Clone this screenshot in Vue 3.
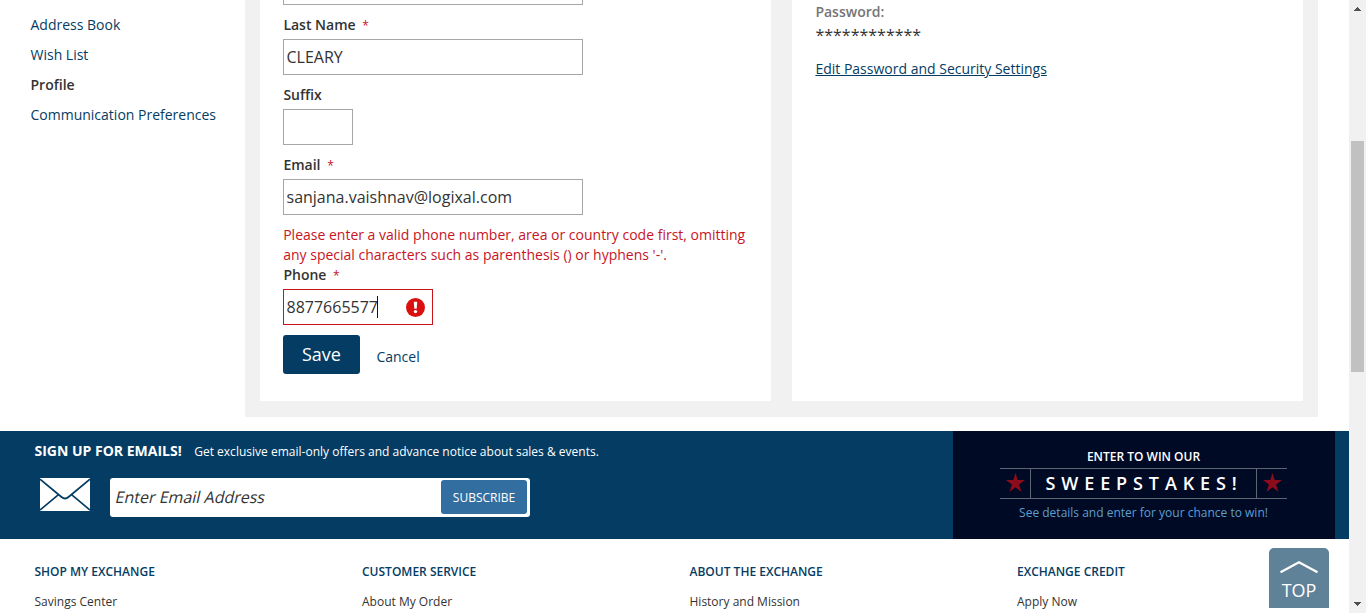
<script setup>
const navItems = [
  { label: 'Address Book' },
  { label: 'Wish List' },
  { label: 'Profile', active: true },
  { label: 'Communication Preferences' },
]

const footerColumns = [
  { title: 'SHOP MY EXCHANGE', link: 'Savings Center' },
  { title: 'CUSTOMER SERVICE', link: 'About My Order' },
  { title: 'ABOUT THE EXCHANGE', link: 'History and Mission' },
  { title: 'EXCHANGE CREDIT', link: 'Apply Now' },
]
</script>

<template>
  <div class="window">
    <div class="page">
      <main class="account">
        <nav class="side">
          <a v-for="item in navItems" :key="item.label" :class="{ active: item.active }">{{ item.label }}</a>
        </nav>
        <div class="panel">
          <section class="card form">
            <div class="box clipped"></div>
            <div class="field">
              <label>Last Name <b>*</b></label>
              <div class="box"><span class="value">CLEARY</span></div>
            </div>
            <div class="field">
              <label>Suffix</label>
              <div class="box tiny"></div>
            </div>
            <div class="field">
              <label>Email <b>*</b></label>
              <div class="box"><span class="value">sanjana.vaishnav@logixal.com</span></div>
            </div>
            <div class="field">
              <p class="error">Please enter a valid phone number, area or country code first, omitting<br>any special characters such as parenthesis () or hyphens '-'.</p>
              <label>Phone <b>*</b></label>
              <div class="box phone">
                <span class="value">8877665577</span><i class="caret"></i>
                <svg class="alert" width="19" height="19" viewBox="0 0 19 19">
                  <circle cx="9.5" cy="9.5" r="9.5" fill="#dc0f0f" />
                  <path d="M7.800 3.800h3.400l-.5 7h-2.400z" fill="#fff" />
                  <circle cx="9.5" cy="13.600" r="1.700" fill="#fff" />
                </svg>
              </div>
            </div>
            <div class="actions">
              <button class="save">Save</button>
              <a class="cancel">Cancel</a>
            </div>
          </section>
          <section class="card security">
            <div class="pw-label">Password:</div>
            <div class="pw-mask">************</div>
            <a class="pw-edit">Edit Password and Security Settings</a>
          </section>
        </div>
      </main>

      <section class="banner">
        <div class="signup">
          <div class="headline"><strong>SIGN UP FOR EMAILS!</strong><span>Get exclusive email-only offers and advance notice about sales &amp; events.</span></div>
          <div class="subscribe-row">
            <svg class="envelope" width="50" height="33" viewBox="0 0 50 33">
              <rect width="50" height="33" fill="#fff" />
              <path d="M0 1.2 21.5 19Q25 22 28.500 19L50 1.200M0 32 18.500 16.700M50 32 31.500 16.700" fill="none" stroke="#043c63" stroke-width="1.7" />
            </svg>
            <div class="email-box">
              <span>Enter Email Address</span>
              <button>SUBSCRIBE</button>
            </div>
          </div>
        </div>
        <div class="sweeps">
          <div class="enter">ENTER TO WIN OUR</div>
          <div class="title-row">
            <div class="star-cell"><svg width="19" height="19" viewBox="0 0 19 19"><path d="M9.500 0 11.700 7H19L13.100 11.500 15.400 18.700 9.500 14.300 3.600 18.700 5.900 11.500 0 7H7.300Z" fill="#8d0c1c" /></svg></div>
            <div class="title">SWEEPSTAKES!</div>
            <div class="star-cell"><svg width="19" height="19" viewBox="0 0 19 19"><path d="M9.500 0 11.700 7H19L13.100 11.500 15.400 18.700 9.500 14.300 3.600 18.700 5.900 11.500 0 7H7.300Z" fill="#8d0c1c" /></svg></div>
          </div>
          <div class="details">See details and enter for your chance to win!</div>
        </div>
      </section>

      <footer class="footer">
        <div v-for="col in footerColumns" :key="col.title" class="col">
          <h4>{{ col.title }}</h4>
          <a>{{ col.link }}</a>
        </div>
      </footer>

      <div class="to-top">
        <svg width="38" height="13" viewBox="0 0 38 13"><path d="M.5 11.300 19 1.300 37.500 11.300" fill="none" stroke="#fff" stroke-width="2.200" /></svg>
        <span>TOP</span>
      </div>
    </div>

    <div class="scrollbar">
      <svg class="arrow" width="7" height="4" viewBox="0 0 7 4" shape-rendering="crispEdges"><path d="M3 0h1v1h1v1h1v1h1v1H0V3h1V2h1V1h1z" fill="#505050" /></svg>
      <div class="thumb"></div>
      <svg class="arrow" width="7" height="4" viewBox="0 0 7 4" shape-rendering="crispEdges"><path d="M0 0h7v1H6v1H5v1H4v1H3V3H2V2H1V1H0z" fill="#505050" /></svg>
    </div>
  </div>
</template>

<style>
body {
  margin: 0;
  overflow: hidden;
}
</style>

<style scoped>
* {
  box-sizing: border-box;
}
.window {
  display: flex;
  width: 1366px;
  height: 613px;
  overflow: hidden;
  background: #fff;
  font-family: "Open Sans", "Noto Sans", sans-serif;
  font-size: 14px;
  color: #333;
  white-space: nowrap;
}
.page {
  position: relative;
  width: 1349px;
  height: 613px;
  overflow: hidden;
}
.account {
  display: flex;
  height: 431px;
}
.side {
  display: flex;
  flex-direction: column;
  width: 245px;
  padding: 10px 0 0 30.500px;
}
.side a {
  height: 30px;
  line-height: 30px;
  color: #043c63;
}
.side a.active {
  font-weight: 600;
  color: #333;
}
.panel {
  display: flex;
  gap: 21px;
  width: 1073px;
  height: 417px;
  padding: 0 15px 16px;
  background: #f1f1f1;
}
.card {
  width: 511px;
  background: #fff;
  padding: 0 23px;
}
.security {
  padding-left: 23.400px;
}
.box {
  display: flex;
  align-items: center;
  width: 300px;
  height: 36px;
  border: 1px solid #a6a6a6;
  padding-left: 2.500px;
  margin-top: 4px;
}
.box.clipped {
  height: 5px;
  border-top: 0;
  margin-top: 0;
}
.box.tiny {
  width: 70px;
}
.box.phone {
  width: 150px;
  border-color: #c7151b;
  padding-right: 7px;
}
.value {
  font-size: 16px;
  line-height: 34px;
}
.phone .value {
  width: 90.500px;
}
.caret {
  width: 1px;
  height: 22px;
  background: #111;
}
.alert {
  margin-left: auto;
  margin-top: 1px;
}
.field {
  margin-top: 10px;
}
label {
  display: block;
  height: 20px;
  line-height: 20px;
  padding-left: 0.400px;
  font-weight: 600;
}
label b {
  margin-left: 3px;
  font-size: 12px;
  font-weight: 400;
  color: #c8102e;
}
.error {
  margin: 0;
  line-height: 20px;
  padding-left: 0.200px;
  color: #c7141f;
}
.actions {
  display: flex;
  align-items: center;
  gap: 16.400px;
  margin-top: 10px;
}
.save {
  width: 77px;
  height: 39px;
  border: 0;
  padding: 0;
  border-radius: 3px;
  background: #043c63;
  color: #fff;
  font: 500 18px/39px "Open Sans", sans-serif;
}
.cancel {
  margin-top: 4px;
  color: #043c63;
}
.pw-label {
  margin-top: 2px;
  line-height: 20px;
  font-weight: 600;
  color: #757575;
}
.pw-mask {
  height: 37px;
  padding-top: 3px;
  font-size: 16px;
  line-height: 20px;
}
.pw-edit {
  line-height: 20px;
  color: #043c63;
  text-decoration: underline;
}
.banner {
  display: flex;
  justify-content: space-between;
  height: 108px;
  padding-right: 14px;
  background: #043c63;
  color: #fff;
}
.signup {
  padding: 10px 0 0 34px;
}
.headline {
  display: flex;
  align-items: baseline;
  gap: 12.500px;
  height: 20px;
  line-height: 20px;
  padding-left: 0.500px;
}
.headline span {
  font-size: 12px;
  letter-spacing: 0.010px;
}
.subscribe-row {
  display: flex;
  gap: 20px;
  margin-top: 17px;
  padding-left: 6px;
}
.email-box {
  display: flex;
  justify-content: space-between;
  width: 420px;
  height: 39px;
  padding: 2px 3px 3px 6px;
  border-radius: 3px;
  background: #fff;
  color: #333;
}
.email-box span {
  font-size: 16px;
  line-height: 34px;
  transform: skewX(-13deg);
}
.email-box button {
  width: 86px;
  border: 0;
  padding: 0;
  border-radius: 3px;
  background: #336ea1;
  color: #fff;
  font: 400 12px/35px "Open Sans", sans-serif;
}
.sweeps {
  display: flex;
  flex-direction: column;
  align-items: center;
  width: 382px;
  padding: 16px 1px 0 0;
  background: #010a25;
}
.enter {
  font-size: 12px;
  font-weight: 600;
  line-height: 20px;
  height: 21px;
}
.title-row {
  display: flex;
  width: 287px;
  height: 31px;
  border-top: 1px solid #5f6573;
  border-bottom: 1px solid #5f6573;
}
.star-cell {
  display: flex;
  align-items: flex-start;
  justify-content: center;
  width: 30px;
  padding-top: 4px;
}
.title {
  width: 227px;
  border-left: 1px solid #5f6573;
  border-right: 1px solid #5f6573;
  padding-left: 14.500px;
  font-size: 18px;
  font-weight: 600;
  line-height: 29px;
  letter-spacing: 5.900px;
}
.details {
  margin-top: 4px;
  font-size: 12px;
  line-height: 20px;
  color: #5c9fd0;
}
.footer {
  display: flex;
  padding: 23px 0 0 34.500px;
}
.col {
  width: 327.500px;
  font-size: 12px;
  line-height: 20px;
}
.col h4 {
  margin: 0 0 10px;
  font-size: 12px;
  font-weight: 600;
  color: #043c63;
}
.to-top {
  position: absolute;
  left: 1269px;
  top: 548px;
  display: flex;
  flex-direction: column;
  align-items: center;
  width: 60px;
  height: 60px;
  padding-top: 13px;
  border-radius: 5px 5px 0 0;
  background: #5f8299;
  color: #fff;
  font-size: 18px;
  line-height: 32px;
}
.scrollbar {
  display: flex;
  flex-direction: column;
  align-items: center;
  width: 17px;
  padding: 7px 0;
  background: #f1f1f1;
}
.thumb {
  width: 13px;
  height: 231px;
  margin: 130px 0 auto;
  background: #c1c1c1;
}
</style>
